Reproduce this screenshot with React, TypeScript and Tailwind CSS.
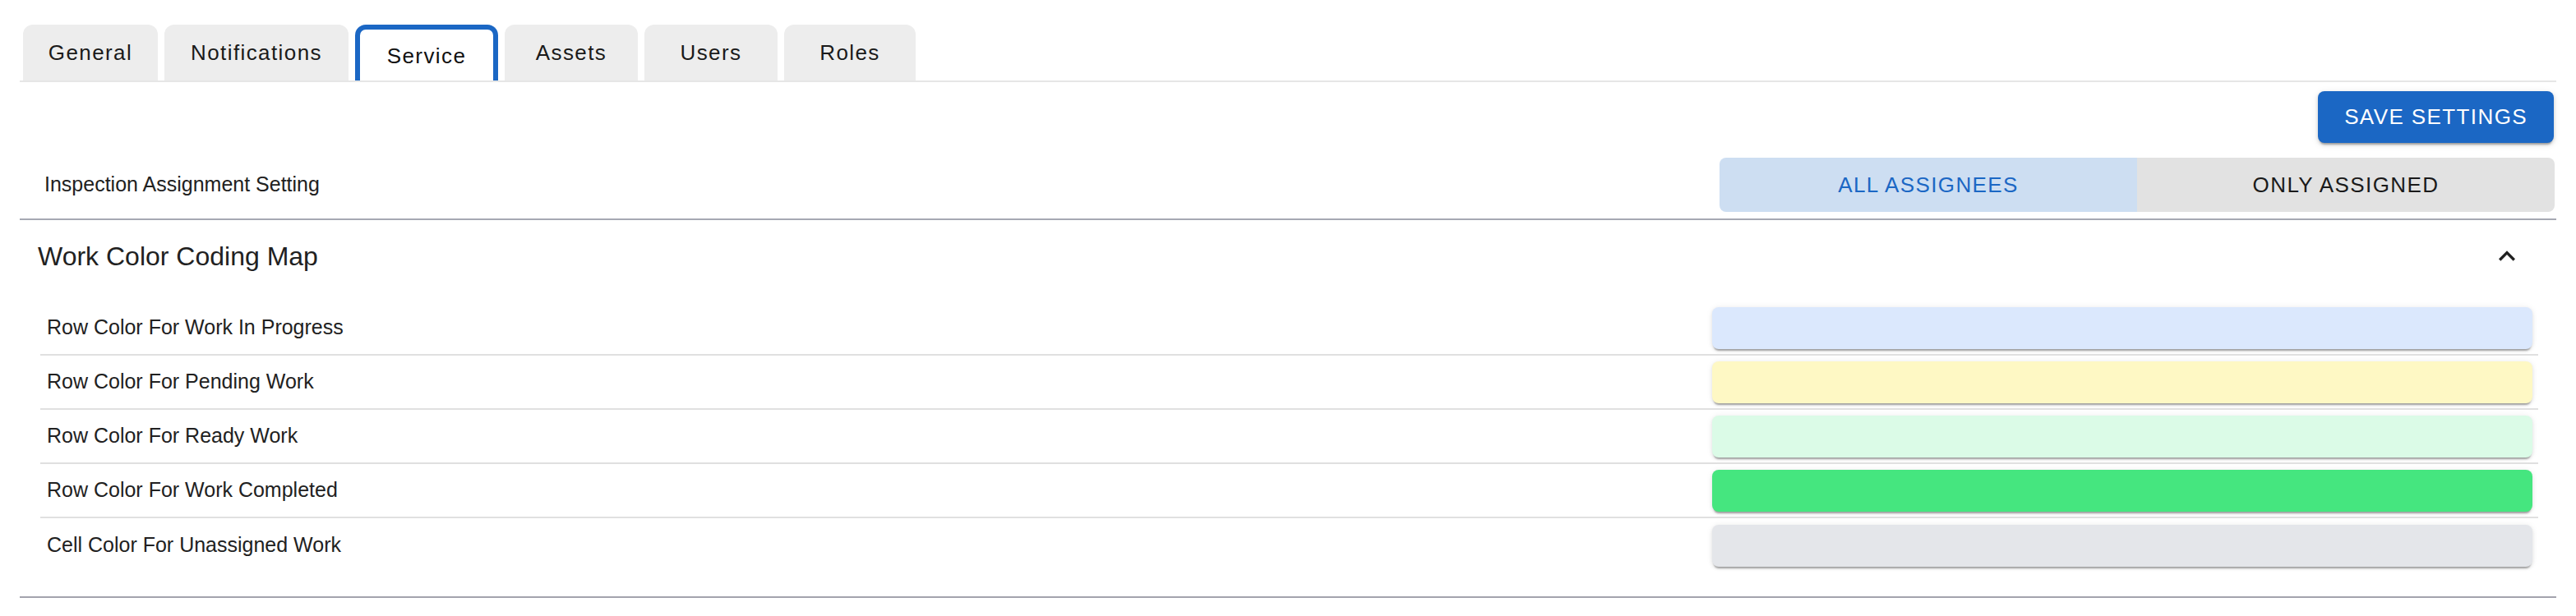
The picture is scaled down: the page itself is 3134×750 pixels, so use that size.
const tabs = [
  { name: "General", w: "w-[164px]" },
  { name: "Notifications", w: "w-[224px]" },
  { name: "Service", w: "w-[174px]" },
  { name: "Assets", w: "w-[162px]" },
  { name: "Users", w: "w-[162px]" },
  { name: "Roles", w: "w-[160px]" },
];

const colorRows = [
  { label: "Row Color For Work In Progress", color: "bg-[#dbe8fd]" },
  { label: "Row Color For Pending Work", color: "bg-[#fef8c4]" },
  { label: "Row Color For Ready Work", color: "bg-[#dbfbe7]" },
  { label: "Row Color For Work Completed", color: "bg-[#45e67f]" },
  { label: "Cell Color For Unassigned Work", color: "bg-[#e4e6ea]" },
];

function ChevronUp() {
  return (
    <svg width="40" height="40" viewBox="0 0 24 24" className="fill-[#212121]">
      <path d="M12 8l-6 6 1.41 1.41L12 10.83l4.59 4.58L18 14z" />
    </svg>
  );
}

export default function App() {
  return (
    <div className="w-full h-[750px] bg-white font-['Liberation_Sans',Arial,sans-serif] text-[#212121]">
      <div className="px-[24px] pt-[30px]">
        <div className="flex gap-[8px] pl-[4px] border-b-2 border-[#e6e6e6]">
          {tabs.map((t) =>
            t.name === "Service" ? (
              <div
                key={t.name}
                className={`${t.w} h-[68px] pt-[2px] flex items-center justify-center rounded-t-[13px] bg-white border-[6px] border-b-0 border-[#1b67c4] text-[26px] tracking-[1.4px] text-[#111]`}
              >
                {t.name}
              </div>
            ) : (
              <div
                key={t.name}
                className={`${t.w} h-[68px] flex items-center justify-center rounded-t-[12px] bg-[#ededed] text-[26px] tracking-[1.4px] text-[#1a1a1a]`}
              >
                {t.name}
              </div>
            )
          )}
        </div>

        <div className="flex justify-end pr-[3px] mt-[11px]">
          <button className="h-[63px] px-[32px] rounded-[8px] bg-[#1b67c4] text-white text-[26px] tracking-[1.4px] uppercase shadow-[0_4px_2px_-2px_rgba(0,0,0,0.25),0_2px_4px_0_rgba(0,0,0,0.14),0_2px_10px_0_rgba(0,0,0,0.1)]">
            Save Settings
          </button>
        </div>

        <div className="flex items-center justify-between mt-[18px] pl-[30px] pr-[2px]">
          <span className="text-[25px]">Inspection Assignment Setting</span>
          <div className="flex w-[1016px] h-[66px] rounded-[8px] overflow-hidden text-[26px] tracking-[1.4px] uppercase">
            <div className="flex-1 flex items-center justify-center bg-[#cddef2] text-[#1b67c4]">
              All Assignees
            </div>
            <div className="flex-1 flex items-center justify-center bg-[#e2e2e2] text-[#1a1a1a]">
              Only Assigned
            </div>
          </div>
        </div>

        <div className="mt-[8px] border-t-2 border-[#a6a9b3]">
          <div className="h-[88px] flex items-center justify-between pl-[22px] pr-[40px]">
            <span className="text-[32px]">Work Color Coding Map</span>
            <ChevronUp />
          </div>
          <div className="pt-[11px] pb-[29px] pl-[25px] pr-[22px]">
            {colorRows.map((r, i) => (
              <div
                key={r.label}
                className={
                  i < colorRows.length - 1
                    ? "h-[66px] flex items-center justify-between pl-[8px] pr-[7px] border-b-2 border-[#e0e0e0]"
                    : "h-[66px] flex items-center justify-between pl-[8px] pr-[7px]"
                }
              >
                <span className="text-[25px]">{r.label}</span>
                <div
                  className={`w-[998px] h-[51px] rounded-[8px] ${r.color} shadow-[0_4px_2px_-2px_rgba(0,0,0,0.3),0_2px_4px_0_rgba(0,0,0,0.1),0_0_8px_rgba(0,0,0,0.06)]`}
                />
              </div>
            ))}
          </div>
          <div className="border-t-2 border-[#a3a3ad]" />
        </div>
      </div>
    </div>
  );
}
